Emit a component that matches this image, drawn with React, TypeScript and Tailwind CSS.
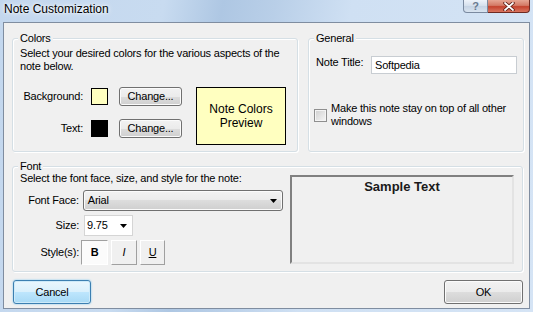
import type { ReactNode } from 'react'

const body = "font-['Liberation_Sans',Arial,sans-serif] text-[11px] tracking-[-0.2px] leading-[13px] text-black"

function VistaButton({ children, className = '' }: { children: ReactNode; className?: string }) {
  return (
    <div
      className={`flex items-center justify-center rounded-[3px] border border-[#707070] bg-[linear-gradient(to_bottom,#f2f2f2_0%,#ebebeb_50%,#dddddd_50%,#cfcfcf_100%)] shadow-[inset_0_0_0_1px_#fbfbfb] ${className}`}
    >
      {children}
    </div>
  )
}

function Group({ title, className = '', children }: { title: string; className?: string; children: ReactNode }) {
  return (
    <div className={`relative rounded-[3px] border border-[#d5dfe5] shadow-[inset_1px_1px_0_#ffffff,1px_1px_0_#ffffff] ${className}`}>
      <span className="absolute -top-[8px] left-[5px] bg-[#f0f0f0] px-[2px] leading-[14px]">{title}</span>
      {children}
    </div>
  )
}

function Arrow() {
  return (
    <svg width="7" height="4" viewBox="0 0 7 4">
      <path d="M0 0h7L3.5 4z" fill="#000" />
    </svg>
  )
}

function ColorsGroup() {
  return (
    <Group title="Colors" className="h-[114px] w-[286px]">
      <div className="pl-[7px] pt-[8px]">
        <p className="whitespace-nowrap">
          Select your desired colors for the various aspects of the
          <br />
          note below.
        </p>
        <div className="mt-[14px] flex items-start">
          <div className="flex flex-col gap-[13px]">
            <div className="flex h-[19px] items-center">
              <span className="w-[63px] whitespace-nowrap text-right">Background:</span>
              <div className="ml-[8px] h-[17px] w-[17px] border border-black bg-[#ffffc0]" />
              <VistaButton className="ml-[11px] h-[19px] w-[63px]">Change...</VistaButton>
            </div>
            <div className="flex h-[19px] items-center">
              <span className="w-[63px] text-right">Text:</span>
              <div className="ml-[8px] h-[17px] w-[17px] border border-black bg-black" />
              <VistaButton className="ml-[11px] h-[19px] w-[63px]">Change...</VistaButton>
            </div>
          </div>
          <div className="ml-[14px] flex h-[58px] w-[90px] items-center justify-center border border-black bg-[#ffffc0] text-center text-[12px] leading-[14px] tracking-normal">
            Note Colors
            <br />
            Preview
          </div>
        </div>
      </div>
    </Group>
  )
}

function GeneralGroup() {
  return (
    <Group title="General" className="h-[114px] w-[216px]">
      <div className="flex items-start pl-[7px] pt-[17px]">
        <span className="w-[55px] whitespace-nowrap">Note Title:</span>
        <div className="h-[18px] w-[146px] border border-[#c8cdd2] bg-white pl-[3px] pt-[2px]">Softpedia</div>
      </div>
      <div className="mt-[28px] flex items-start pl-[5px]">
        <div className="mt-[7px] h-[13px] w-[13px] shrink-0 border border-[#8f8f8f] bg-[linear-gradient(135deg,#cfcfcf,#f6f6f6)] shadow-[inset_0_0_0_1px_#f4f4f4]" />
        <p className="ml-[4px] whitespace-nowrap">
          Make this note stay on top of all other
          <br />
          windows
        </p>
      </div>
    </Group>
  )
}

function FontGroup() {
  return (
    <Group title="Font" className="h-[106px] w-[511px]">
      <div className="flex items-start">
        <div className="w-[270px] pl-[7px] pt-[5px]">
          <p className="whitespace-nowrap">Select the font face, size, and style for the note:</p>
          <div className="mt-[5px] flex h-[21px] items-center">
            <span className="w-[59px] whitespace-nowrap text-right">Font Face:</span>
            <VistaButton className="ml-[4px] h-[21px] w-[201px] !justify-between pl-[4px] pr-[5px]">
              <span>Arial</span>
              <Arrow />
            </VistaButton>
          </div>
          <div className="mt-[4px] flex h-[21px] items-center">
            <span className="w-[59px] text-right">Size:</span>
            <div className="ml-[5px] flex h-[21px] w-[49px] items-center justify-between border border-[#d5d5d5] bg-white pl-[2px] pr-[5px]">
              <span>9.75</span>
              <Arrow />
            </div>
          </div>
          <div className="mt-[4px] flex h-[25px] items-center">
            <span className="w-[59px] whitespace-nowrap text-right">Style(s):</span>
            <div className="ml-[2px] flex gap-[3px]">
              <div className="flex h-[25px] w-[27px] items-center justify-center border border-b-white border-l-[#a0a0a0] border-r-white border-t-[#a0a0a0] bg-[#fbfbfb] font-bold">
                B
              </div>
              <div className="flex h-[25px] w-[26px] items-center justify-center border border-b-[#a0a0a0] border-l-white border-r-[#a0a0a0] border-t-white italic">
                I
              </div>
              <div className="flex h-[25px] w-[25px] items-center justify-center border border-b-[#a0a0a0] border-l-white border-r-[#a0a0a0] border-t-white underline">
                U
              </div>
            </div>
          </div>
        </div>
        <div className="ml-[7px] mt-[8px] h-[89px] w-[224px] border-2 border-b-[#e3e3e3] border-l-[#808080] border-r-[#e3e3e3] border-t-[#808080] pt-[2px] text-center text-[13px] font-bold leading-[15px] tracking-normal text-[#1a1a1a]">
          Sample Text
        </div>
      </div>
    </Group>
  )
}

export default function App() {
  return (
    <div className="flex h-[312px] w-[533px] flex-col overflow-hidden bg-[linear-gradient(100deg,#c3d7ee_0%,#c8dbf0_28%,#aec7e3_38%,#b9cfe8_47%,#cfe0f3_60%,#d5e4f5_100%)] px-[3px] pb-[3px]">
      <div className="flex h-[22px] shrink-0 items-start justify-between">
        <span className="mt-[2px] pl-[1px] font-['Liberation_Sans',Arial,sans-serif] text-[12px] leading-[15px] text-black [text-shadow:0_0_6px_#fff,0_0_3px_#fff]">
          Note Customization
        </span>
        <div className="flex">
          <div className="flex h-[13px] w-[25px] items-center justify-center rounded-bl-[4px] border border-t-0 border-[#7b8aa0] bg-[linear-gradient(to_bottom,#eef3fa,#d4dfec_50%,#c5d3e4_51%,#d9e4f0)] font-['Liberation_Sans',Arial,sans-serif] text-[11px] font-bold leading-none text-[#6a7a90]">
            ?
          </div>
          <div className="flex h-[13px] w-[42px] items-center justify-center rounded-br-[4px] border border-l-0 border-t-0 border-[#6e2a22] bg-[linear-gradient(to_bottom,#e6a694,#d47a66_45%,#c4432e_55%,#d97560)]">
            <svg width="12" height="9" viewBox="0 0 12 9">
              <path d="M2 1l8 7M10 1L2 8" stroke="#5a1a12" strokeWidth="3.4" strokeLinecap="round" />
              <path d="M2 1l8 7M10 1L2 8" stroke="#ffffff" strokeWidth="1.8" strokeLinecap="round" />
            </svg>
          </div>
        </div>
      </div>
      <div className={`flex flex-1 flex-col border border-[#7f8da0] bg-[#f0f0f0] pl-[8px] pt-[15px] ${body}`}>
        <div className="flex gap-[10px]">
          <ColorsGroup />
          <GeneralGroup />
        </div>
        <div className="mt-[14px]">
          <FontGroup />
        </div>
        <div className="mt-[8px] flex w-[511px] justify-between pl-[1px]">
          <div className="flex h-[24px] w-[78px] items-center justify-center rounded-[3px] border border-[#3c7fb1] bg-[linear-gradient(to_bottom,#eaf6fd_0%,#d9f0fc_50%,#bee6fd_50%,#a7d9f5_100%)] shadow-[inset_0_0_0_1px_#cdeaf9,0_0_2px_#6fc2ef]">
            Cancel
          </div>
          <VistaButton className="h-[24px] w-[79px]">OK</VistaButton>
        </div>
      </div>
    </div>
  )
}
